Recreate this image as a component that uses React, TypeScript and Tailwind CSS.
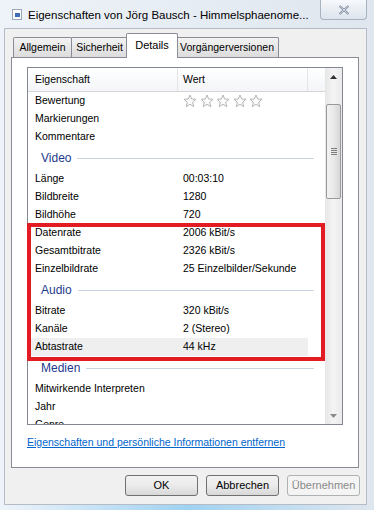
import React from 'react';

type Row = { name: string; value?: string; stars?: boolean; selected?: boolean };
type Group = { title?: string; rows: Row[] };

const groups: Group[] = [
    {
        rows: [
            { name: 'Bewertung', stars: true },
            { name: 'Markierungen' },
            { name: 'Kommentare' },
        ],
    },
    {
        title: 'Video',
        rows: [
            { name: 'Länge', value: '00:03:10' },
            { name: 'Bildbreite', value: '1280' },
            { name: 'Bildhöhe', value: '720' },
            { name: 'Datenrate', value: '2006 kBit/s' },
            { name: 'Gesamtbitrate', value: '2326 kBit/s' },
            { name: 'Einzelbildrate', value: '25 Einzelbilder/Sekunde' },
        ],
    },
    {
        title: 'Audio',
        rows: [
            { name: 'Bitrate', value: '320 kBit/s' },
            { name: 'Kanäle', value: '2 (Stereo)' },
            { name: 'Abtastrate', value: '44 kHz', selected: true },
        ],
    },
    {
        title: 'Medien',
        rows: [
            { name: 'Mitwirkende Interpreten' },
            { name: 'Jahr' },
            { name: 'Genre' },
        ],
    },
];

const Star = () => (
    <svg width="14" height="14" viewBox="0 0 14 14">
        <path
            d="M7 1 L8.7 5 L13 5.3 L9.7 8.2 L10.7 12.6 L7 10.3 L3.3 12.6 L4.3 8.2 L1 5.3 L5.3 5 Z"
            fill="#fbfbfb"
            stroke="#b4b4b4"
            strokeWidth="1"
            strokeLinejoin="round"
        />
    </svg>
);

// tab widths taken from the reference strip
const Tab = ({ label, active, w }: { label: string; active?: boolean; w: string }) =>
    active ? (
        <div className={`relative z-10 -mx-[2px] -mb-px flex h-[25px] justify-center rounded-t-[2px] border border-b-0 border-[#898c95] bg-white pt-[3px] text-[11px] text-black ${w}`}>
            {label}
        </div>
    ) : (
        <div className={`-ml-px flex h-[20px] items-center justify-center rounded-t-[2px] border border-b-0 border-[#898c95] bg-gradient-to-b from-[#f3f3f3] to-[#dcdcdc] text-[10.5px] text-black first:ml-0 ${w}`}>
            {label}
        </div>
    );

const Button = ({ label, disabled }: { label: string; disabled?: boolean }) => (
    <div
        className={
            disabled
                ? 'flex h-[21px] w-[73px] items-center justify-center rounded-[3px] border border-[#adb2b5] bg-[#f4f4f4] text-[11px] text-[#8a8a8a]'
                : 'flex h-[21px] w-[73px] items-center justify-center rounded-[3px] border border-[#707070] bg-gradient-to-b from-[#f2f2f2] via-[#ebebeb] to-[#d8d8d8] text-[11px] text-black'
        }
    >
        {label}
    </div>
);

export default function App() {
    return (
        <div className="flex h-[510px] w-[374px] flex-col overflow-hidden bg-gradient-to-r from-[#eef3f9] to-[#dfe6ee] font-['Liberation_Sans',Arial,sans-serif]">
            {/* title bar */}
            <div className="flex h-[28px] shrink-0 items-start">
                <div className="ml-[12px] mt-[9px] flex h-[11px] w-[10px] shrink-0 items-end justify-center border border-[#9aa7b8] bg-white">
                    <div className="mb-[2px] h-[4px] w-[5px] bg-[#3d6fb5]" />
                </div>
                <div className="ml-[6px] mt-[7px] whitespace-nowrap text-[11.5px] text-black">
                    Eigenschaften von Jörg Bausch - Himmelsphaenome...
                </div>
                <div className="ml-auto mr-[7px] flex h-[20px] w-[47px] shrink-0 items-center justify-center rounded-b-[4px] border border-t-0 border-[#a9b3c0] bg-gradient-to-b from-[#f6f8fb] to-[#dde4ed]">
                    <svg width="12" height="10" viewBox="0 0 12 10">
                        <path d="M1.5 1 L10.5 9 M10.5 1 L1.5 9" stroke="#7a8a9e" strokeWidth="2.2" />
                        <path d="M1.5 1 L10.5 9 M10.5 1 L1.5 9" stroke="#f4f6f9" strokeWidth="0.7" />
                    </svg>
                </div>
            </div>

            {/* client area */}
            <div className="ml-[4px] mr-[7px] flex flex-1 flex-col border border-[#b5bcc6] bg-[#f0f0f0]">
                {/* tabs */}
                <div className="flex h-[28px] items-end pl-[8px]">
                    <Tab label="Allgemein" w="w-[59px]" />
                    <Tab label="Sicherheit" w="w-[57px]" />
                    <Tab label="Details" active w="w-[52px]" />
                    <Tab label="Vorgängerversionen" w="w-[104px]" />
                </div>

                {/* tab panel */}
                <div className="ml-[6px] mr-[7px] flex h-[411px] flex-col border border-[#898c95] bg-white px-[15px] pt-[9px]">
                    <div className="relative flex h-[358px] border border-[#828790]">
                        <div className="flex flex-1 flex-col overflow-hidden">
                            {/* header */}
                            <div className="flex h-[24px] shrink-0 border-b border-[#d5d5d5] bg-gradient-to-b from-white to-[#f3f5f8] text-[10.5px] text-black">
                                <div className="flex w-[150px] items-center border-r border-[#e5e5e5] pl-[7px]">
                                    Eigenschaft
                                </div>
                                <div className="flex w-[130px] items-center border-r border-[#e5e5e5] pl-[5px]">
                                    Wert
                                </div>
                                <div className="flex-1" />
                            </div>

                            {groups.map((g, gi) => (
                                <div key={gi} className="flex flex-col">
                                    {g.title && (
                                        <div className="flex h-[24px] items-center pl-[13px] pr-[11px]">
                                            <span className="text-[12px] text-[#1e3a8f]">{g.title}</span>
                                            <div className="ml-[6px] h-px flex-1 bg-[#cbd5e2]" />
                                        </div>
                                    )}
                                    {g.rows.map((r) => (
                                        <div
                                            key={r.name}
                                            className={
                                                r.selected
                                                    ? 'flex h-[18px] w-[280px] shrink-0 items-center bg-[#efefef] text-[10.5px] text-black'
                                                    : 'flex h-[18px] w-[280px] shrink-0 items-center text-[10.5px] text-black'
                                            }
                                        >
                                            <div className="w-[155px] pl-[7px]">{r.name}</div>
                                            {r.stars ? (
                                                <div className="flex gap-[2.5px]">
                                                    <Star />
                                                    <Star />
                                                    <Star />
                                                    <Star />
                                                    <Star />
                                                </div>
                                            ) : (
                                                <div>{r.value}</div>
                                            )}
                                        </div>
                                    ))}
                                </div>
                            ))}
                        </div>

                        {/* scrollbar */}
                        <div className="flex w-[17px] shrink-0 flex-col bg-gradient-to-r from-[#e6e6e6] via-[#f4f4f4] to-[#eaeaea]">
                            <div className="flex h-[17px] items-center justify-center">
                                <svg width="7" height="4" viewBox="0 0 7 4">
                                    <path d="M0 4 L3.5 0 L7 4 Z" fill="#333" />
                                </svg>
                            </div>
                            <div className="ml-[1px] mt-[19px] flex h-[95px] w-[15px] items-center justify-center rounded-[2px] border border-[#9a9a9a] bg-gradient-to-r from-[#f2f2f2] via-[#e9e9e9] to-[#d6d6d6]">
                                <div className="flex flex-col gap-[1px]">
                                    <div className="h-px w-[6px] bg-[#7d7d7d]" />
                                    <div className="h-px w-[6px] bg-[#7d7d7d]" />
                                    <div className="h-px w-[6px] bg-[#7d7d7d]" />
                                    <div className="h-px w-[6px] bg-[#7d7d7d]" />
                                </div>
                            </div>
                            <div className="flex-1" />
                            <div className="flex h-[17px] items-center justify-center">
                                <svg width="7" height="4" viewBox="0 0 7 4">
                                    <path d="M0 0 L3.5 4 L7 0 Z" fill="#8a8a8a" />
                                </svg>
                            </div>
                        </div>

                        {/* annotation */}
                        <div className="pointer-events-none absolute -left-px top-[155px] h-[138px] w-[298px] border-[4px] border-[#e31c24]" />
                    </div>

                    <div className="mt-[10px] text-[10.5px] text-[#0066cc] underline">
                        Eigenschaften und persönliche Informationen entfernen
                    </div>
                </div>

                {/* buttons */}
                <div className="mt-[7px] flex justify-end gap-[8px] pr-[6px]">
                    <Button label="OK" />
                    <Button label="Abbrechen" />
                    <Button label="Übernehmen" disabled />
                </div>
            </div>

            {/* bottom glow */}
            <div className="h-[5px] shrink-0 bg-gradient-to-r from-[#eef3f9] via-[#9fd2f2] to-[#dfe6ee]" />
        </div>
    );
}
